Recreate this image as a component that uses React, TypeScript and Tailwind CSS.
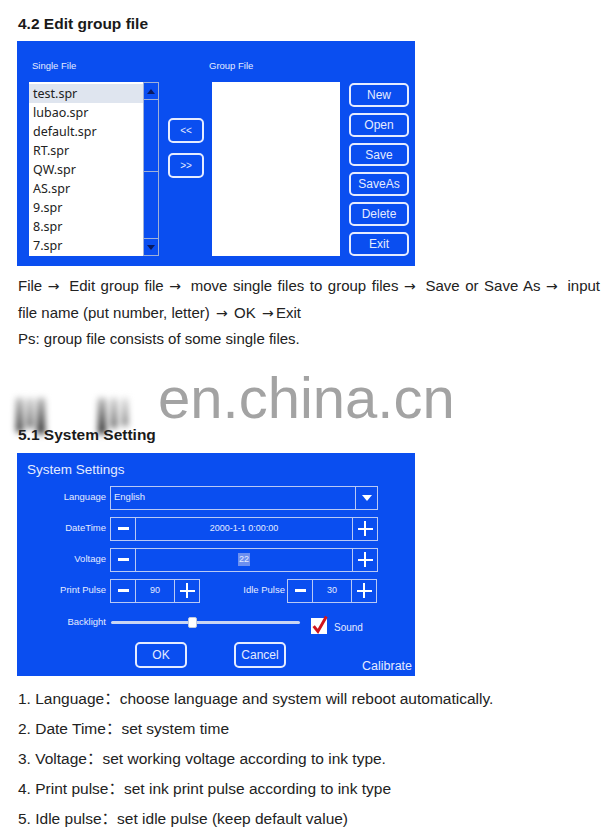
import React from 'react';

const BLUE = 'bg-[#0a4ef0]';

const singleFiles = ['test.spr', 'lubao.spr', 'default.spr', 'RT.spr', 'QW.spr', 'AS.spr', '9.spr', '8.spr', '7.spr'];
const actions = ['New', 'Open', 'Save', 'SaveAs', 'Delete', 'Exit'];

const notes = [
  ['1. Language', 'choose language and system will reboot automatically.'],
  ['2. Date Time', 'set system time'],
  ['3. Voltage', 'set working voltage according to ink type.'],
  ['4. Print pulse', 'set ink print pulse according to ink type'],
  ['5. Idle pulse', 'set idle pulse (keep default value)'],
];

function Minus() {
  return (
    <div className="w-[24px] h-full flex items-center justify-center shrink-0">
      <div className="w-[11px] h-[3px] bg-white" />
    </div>
  );
}

function Plus() {
  return (
    <div className="w-[24px] h-full flex items-center justify-center shrink-0 relative">
      <div className="w-[15px] h-[2px] bg-white absolute" />
      <div className="w-[2px] h-[15px] bg-white absolute" />
    </div>
  );
}

function Stepper({ value, width, highlight }: { value: string; width: string; highlight?: boolean }) {
  return (
    <div className={`${width} h-[24px] border border-[#b9c9f5] flex items-stretch`}>
      <Minus />
      <div className="flex-1 border-x border-[#b9c9f5] flex items-center justify-center text-[9px] text-[#e4ebff]">
        <span className={highlight ? 'bg-[#6d8ff0] px-[1px]' : ''}>{value}</span>
      </div>
      <Plus />
    </div>
  );
}

function Label({ children }: { children: React.ReactNode }) {
  return <div className="w-[93px] text-right pr-[4px] text-[9.5px] text-[#e4ebff] shrink-0">{children}</div>;
}

function Arrow() {
  return <span className="inline-block w-[16px] text-center font-['DejaVu_Sans',sans-serif] text-[14px]">→</span>;
}

export default function App() {
  return (
    <div className="relative w-[609px] h-[832px] overflow-hidden bg-white text-[#1a1a1a] font-['Liberation_Sans',Arial,sans-serif]">
      {/* 4.2 */}
      <h2 className="pl-[18px] pt-[15px] text-[15.5px] font-bold leading-[18px]">4.2 Edit group file</h2>

      <div className={`ml-[17px] mt-[8px] w-[398px] h-[225px] ${BLUE} pl-[12px] pt-[18px]`}>
        <div className="flex h-[14px] text-[9.5px] text-[#e4ebff] items-center">
          <span className="pl-[3px] w-[180px]">Single File</span>
          <span>Group File</span>
        </div>
        <div className="flex mt-[9px] h-[174px]">
          {/* single file list */}
          <div className="w-[114px] bg-white pt-[2px] font-['Noto_Sans',sans-serif] text-[12.5px] text-[#222]">
            {singleFiles.map((f, i) => (
              <div
                key={f}
                className={`h-[19px] leading-[19px] pl-[4px] ${i === 0 ? 'bg-[#dfe5ef]' : ''}`}
              >
                {f}
              </div>
            ))}
          </div>
          <div className="w-[16px] border border-[#9fb0d8] flex flex-col">
            <div className="h-[17px] border-b border-[#9fb0d8] flex items-center justify-center">
              <div className="w-0 h-0 border-x-[4px] border-x-transparent border-b-[5px] border-b-[#0a1a60]" />
            </div>
            <div className="h-[72px] border-b border-[#9fb0d8]" />
            <div className="flex-1" />
            <div className="h-[17px] border-t border-[#9fb0d8] flex items-center justify-center">
              <div className="w-0 h-0 border-x-[4px] border-x-transparent border-t-[5px] border-t-[#0a1a60]" />
            </div>
          </div>

          {/* move buttons */}
          <div className="ml-[9px] w-[36px] pt-[36px] flex flex-col gap-[10px]">
            {['<<', '>>'].map((t) => (
              <div
                key={t}
                className="h-[25px] border-2 border-[#e6ecff] rounded-[5px] flex items-center justify-center text-[10px] text-[#e4ebff]"
              >
                {t}
              </div>
            ))}
          </div>

          {/* group file box */}
          <div className="ml-[8px] w-[128px] bg-white" />

          {/* action buttons */}
          <div className="ml-[9px] w-[60px] pt-[1px] flex flex-col gap-[6px]">
            {actions.map((a) => (
              <div
                key={a}
                className="h-[24px] border-2 border-[#e6ecff] rounded-[5px] flex items-center justify-center text-[12px] text-[#e4ebff]"
              >
                {a}
              </div>
            ))}
          </div>
        </div>
      </div>

      <div className="pl-[18px] pt-[7px] text-[15px] text-[#222]">
        <p className="w-[582px] h-[26.5px] leading-[26.5px] whitespace-nowrap text-justify [text-align-last:justify]">
          File <Arrow /> Edit group file <Arrow /> move single files to group files <Arrow /> Save or Save As <Arrow /> input
        </p>
        <p className="h-[26.5px] leading-[26.5px] whitespace-nowrap">
          file name (put number, letter) <Arrow /> OK <Arrow />Exit
        </p>
        <p className="h-[26.5px] leading-[26.5px] whitespace-nowrap">Ps: group file consists of some single files.</p>
      </div>

      {/* 5.1 */}
      <h2 className="ml-[18px] mt-[73px] h-[18px] text-[15.5px] font-bold leading-[18px] whitespace-nowrap">
        5.1 System Setting
      </h2>

      <div className={`ml-[17px] mt-[9px] w-[398px] h-[223px] ${BLUE} flex flex-col`}>
        <div className="pl-[10px] pt-[7px] h-[33px] shrink-0 text-[13.5px] text-[#e4ebff]">System Settings</div>

        <div className="flex flex-col gap-[7px]">
          <div className="flex items-center">
            <Label>Language</Label>
            <div className="w-[268px] h-[24px] border border-[#b9c9f5] flex items-stretch">
              <div className="flex-1 flex items-center pl-[3px] text-[9.5px] text-[#e4ebff]">English</div>
              <div className="w-[22px] border-l border-[#b9c9f5] flex items-center justify-center">
                <div className="w-0 h-0 border-x-[5px] border-x-transparent border-t-[6px] border-t-white" />
              </div>
            </div>
          </div>
          <div className="flex items-center">
            <Label>DateTime</Label>
            <Stepper value="2000-1-1 0:00:00" width="w-[268px]" />
          </div>
          <div className="flex items-center">
            <Label>Voltage</Label>
            <Stepper value="22" width="w-[268px]" highlight />
          </div>
          <div className="flex items-center">
            <Label>Print Pulse</Label>
            <Stepper value="90" width="w-[90px]" />
            <div className="w-[87px] text-right pr-[2px] text-[9.5px] text-[#e4ebff]">Idle Pulse</div>
            <Stepper value="30" width="w-[90px]" />
          </div>
        </div>

        <div className="flex items-center mt-[10px] h-[20px] shrink-0">
          <Label>Backlight</Label>
          <div className="relative ml-[1px] w-[189px] h-[3px] bg-[#c9d5f3] rounded-full">
            <div className="absolute left-[77px] -top-[4px] w-[9px] h-[11px] bg-white rounded-[2px] border border-[#c0c8dc]" />
          </div>
          <div className="ml-[11px] mt-[6px] w-[16px] h-[16px] bg-white relative">
            <svg viewBox="0 0 16 16" className="absolute -top-[3px] left-0 w-[17px] h-[19px] overflow-visible">
              <path d="M2.5 9.5 L6.5 14.5 L14.5 0.5" fill="none" stroke="#d0141c" strokeWidth="2.8" strokeLinejoin="miter" />
            </svg>
          </div>
          <span className="ml-[7px] mt-[10px] text-[10px] text-[#e4ebff]">Sound</span>
        </div>

        <div className="flex items-start mt-[9px]">
          <div className="ml-[118px] w-[52px] h-[26px] border-2 border-[#e6ecff] rounded-[5px] flex items-center justify-center text-[12px] text-[#e4ebff]">
            OK
          </div>
          <div className="ml-[47px] w-[52px] h-[26px] border-2 border-[#e6ecff] rounded-[5px] flex items-center justify-center text-[12px] text-[#e4ebff]">
            Cancel
          </div>
          <div className="ml-[76px] mt-[15px] text-[12.5px] text-[#e4ebff]">Calibrate</div>
        </div>
      </div>

      <div className="pl-[18px] pt-[6px] text-[15.5px] text-[#222]">
        {notes.map(([k, v]) => (
          <p key={k} className="h-[30px] leading-[30px] whitespace-nowrap">
            {k}
            <span className="font-['Noto_Sans_CJK_SC',sans-serif] leading-[30px]">：</span>
            {v}
          </p>
        ))}
      </div>

      {/* watermark */}
      <div className="absolute left-[158px] top-[366px] text-[58px] leading-[64px] text-[#a3a3a3] pointer-events-none">
        en.china.cn
      </div>
      <div className="absolute left-[16px] top-[398px] flex gap-[4px] blur-[3px] pointer-events-none">
        <div className="w-[7px] h-[34px] bg-gradient-to-b from-[#bbb] to-[#333]" />
        <div className="w-[6px] h-[30px] bg-gradient-to-b from-[#ccc] to-[#555]" />
        <div className="w-[8px] h-[36px] bg-gradient-to-b from-[#bbb] to-[#222]" />
      </div>
      <div className="absolute left-[98px] top-[398px] flex gap-[5px] blur-[3px] pointer-events-none">
        <div className="w-[8px] h-[36px] bg-gradient-to-b from-[#bbb] to-[#222]" />
        <div className="w-[6px] h-[30px] bg-gradient-to-b from-[#ccc] to-[#555]" />
        <div className="w-[6px] h-[28px] bg-gradient-to-b from-[#ddd] to-[#777]" />
      </div>
    </div>
  );
}
